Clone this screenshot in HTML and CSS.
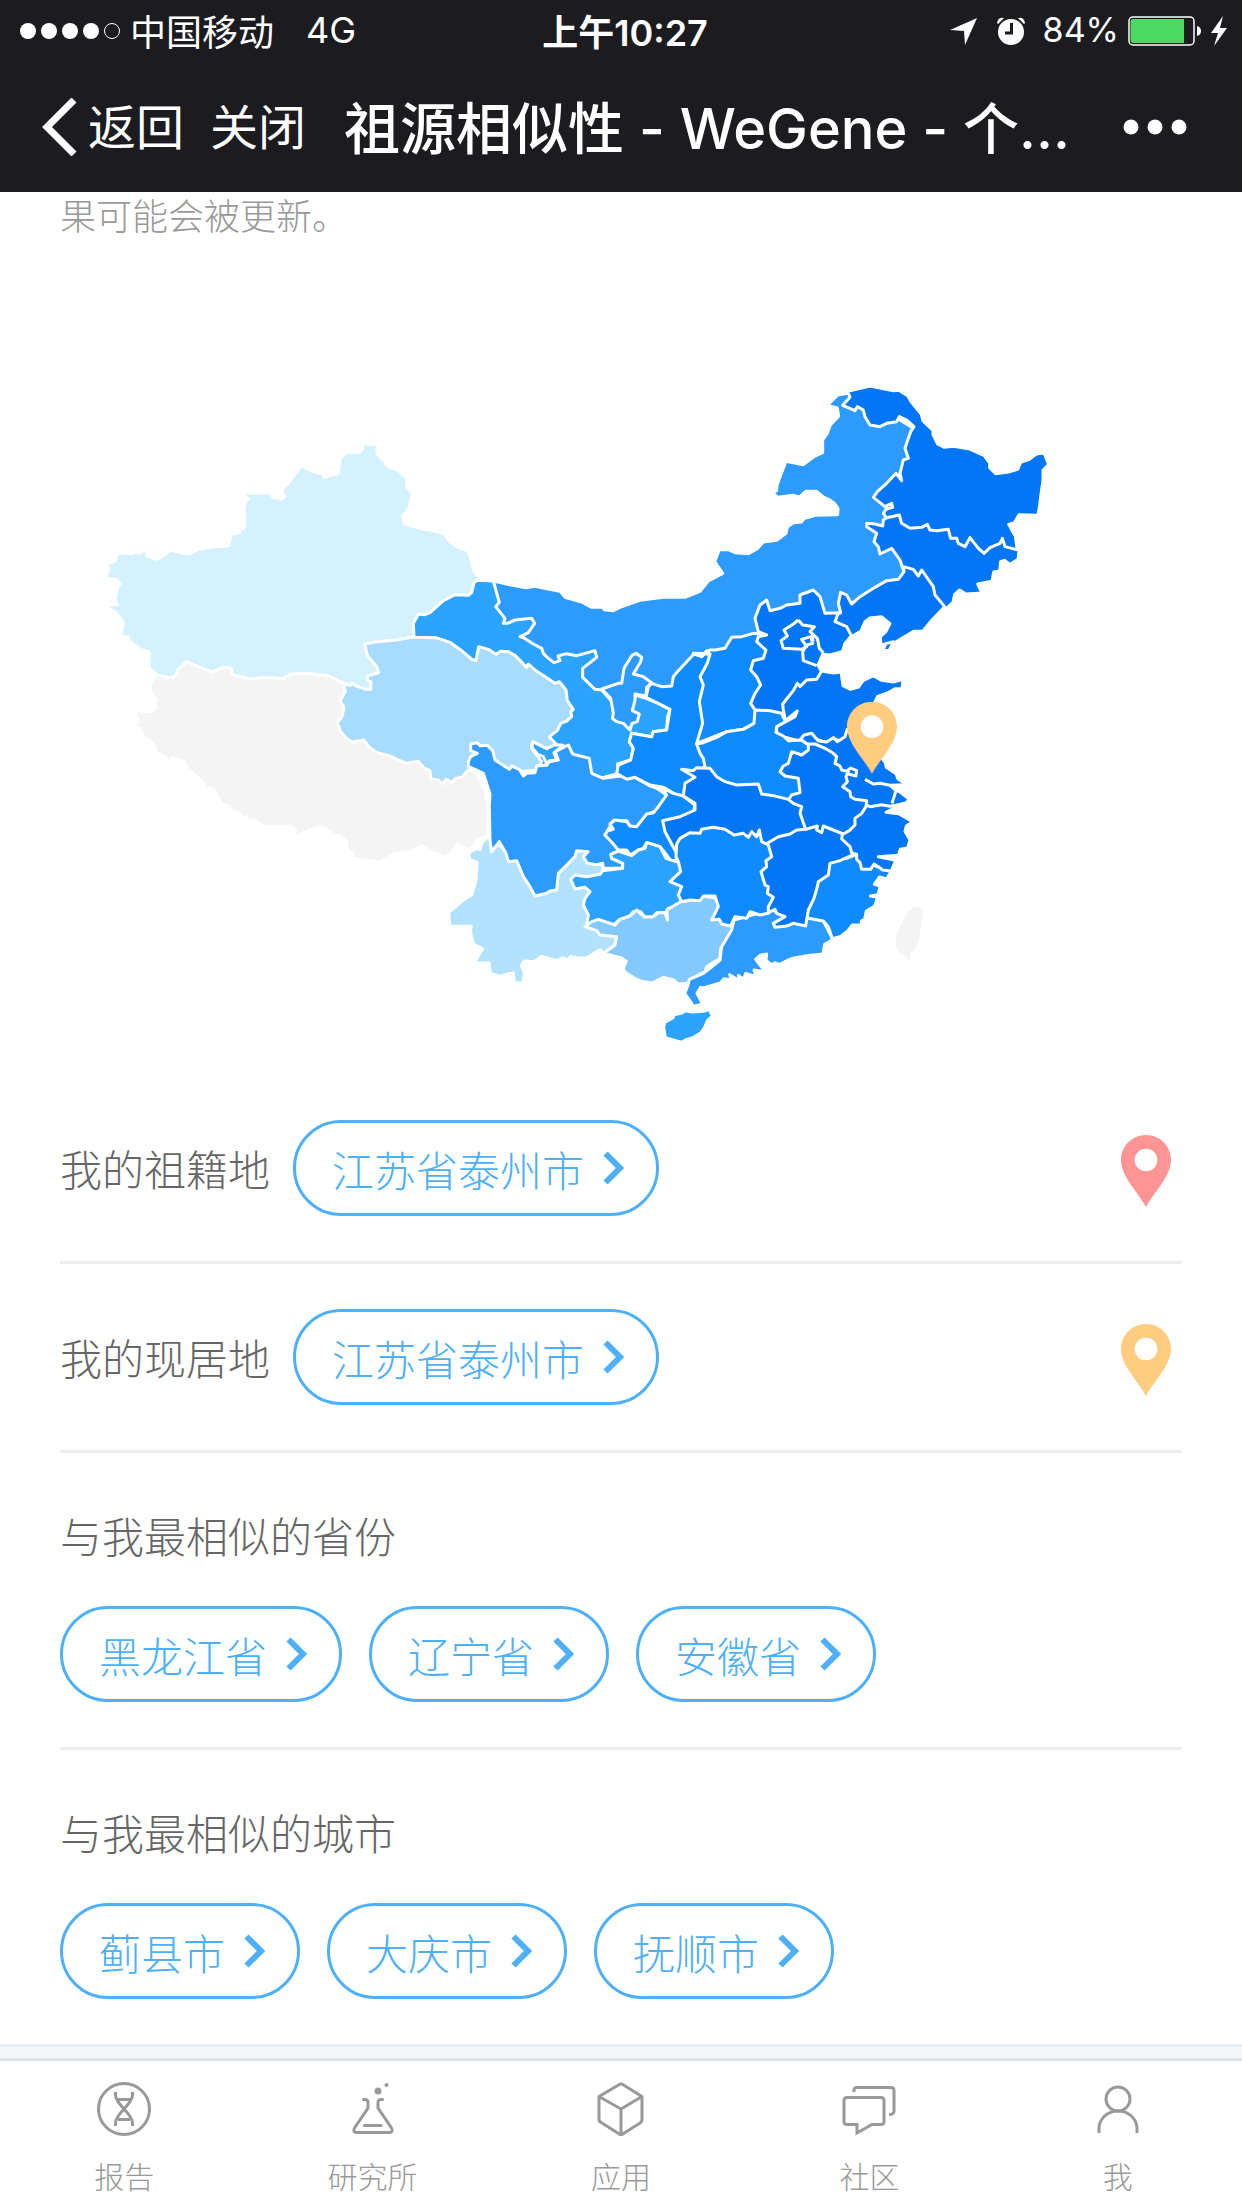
FILE: index.html
```html
<!DOCTYPE html>
<html lang="zh-CN">

<head>
    <meta charset="UTF-8">
    <meta name="viewport" content="width=device-width, initial-scale=1.0">
    <title>祖源相似性 - WeGene</title>
    <link rel="stylesheet" href="styles.css">
</head>

<body>
    <!-- 公用图标 -->
    <svg class="sprite" aria-hidden="true">
        <symbol id="pin" viewBox="0 0 150 216">
            <path d="M75 0C33 0 0 33 0 75C0 124 50 170 75 216C100 170 150 124 150 75C150 33 117 0 75 0Z" />
            <circle cx="75" cy="75" r="34" fill="#fff" />
        </symbol>
        <symbol id="arrow" viewBox="0 0 21 34">
            <path d="M2.500 2.500L17 17L2.500 31.500" fill="none" stroke="currentColor" stroke-width="6" />
        </symbol>
    </svg>

    <header class="header">
        <div class="status">
            <div class="status-left">
                <svg class="signal" viewBox="0 0 102 18">
                    <circle cx="9" cy="9" r="8" />
                    <circle cx="30" cy="9" r="8" />
                    <circle cx="51" cy="9" r="8" />
                    <circle cx="72" cy="9" r="8" />
                    <circle cx="93" cy="9" r="7.500" fill="none" stroke="#fff" />
                </svg>
                <span>中国移动</span>
                <span class="network">4G</span>
            </div>
            <div class="time">上午10:27</div>
            <div class="status-right">
                <svg class="location" viewBox="0 0 27 27"><path d="M27 0L15 27L14 13L0 12Z" /></svg>
                <svg class="alarm" viewBox="0 0 28 28">
                    <circle cx="14" cy="15" r="13" />
                    <path d="M0 6Q1 0 7 1L1 7ZM28 6Q27 0 21 1L27 7Z" />
                    <path d="M14.500 6V16H8" fill="none" stroke="#1b1b20" stroke-width="3" />
                </svg>
                <span class="percent">84%</span>
                <svg class="battery" viewBox="0 0 74 30">
                    <rect x="1" y="1" width="65" height="28" rx="4" fill="none" stroke="#fff" stroke-width="1.500" />
                    <path d="M5 3H56V27H5Q2.500 27 2.500 24V6Q2.500 3 5 3Z" fill="#4cd964" />
                    <path d="M69 10Q73 11 73 15Q73 19 69 20Z" />
                </svg>
                <svg class="bolt" viewBox="0 0 16 30"><path d="M12 0L0 17H7L3 30L16 12H9Z" /></svg>
            </div>
        </div>
        <div class="navbar">
            <button class="back" type="button">
                <svg viewBox="0 0 36 58"><path d="M32 2L5 29L32 56" fill="none" stroke="#fff" stroke-width="7" /></svg>
                <span>返回</span>
            </button>
            <button class="close" type="button">关闭</button>
            <h1>祖源相似性 - WeGene - 个…</h1>
            <button class="more" type="button" aria-label="更多">
                <svg viewBox="0 0 64 16">
                    <circle cx="8" cy="8" r="7.500" />
                    <circle cx="32" cy="8" r="7.500" />
                    <circle cx="56" cy="8" r="7.500" />
                </svg>
            </button>
        </div>
    </header>

    <main class="content">
        <p class="tip">果可能会被更新。</p>

        <!-- 地图：后画的省份盖住先画的，省界只描一次 -->
        <svg class="map" viewBox="0 0 3366 2115" role="img" aria-label="祖源相似性地图">
            <!-- 内蒙古 -->
            <path class="c4" d="M1300 633L1350 644L1398 653L1425 649L1460 656L1500 664L1517 683L1565 696L1595 712L1630 712L1632 719L1660 722L1680 712L1740 691L1810 682L1875 682L1920 664L1945 633L1988 610L1980 598L1964 575L1978 539L2005 539L2025 548L2065 551L2092 536L2110 516L2150 511L2178 490L2182 471L2200 458L2225 456L2232 446L2265 436L2333 434L2334 415L2322 399L2308 389L2290 381L2270 364L2237 364L2218 381L2200 376L2153 382L2138 368L2150 362L2151 345L2178 274L2230 284L2265 258L2288 248L2288 210L2302 190L2311 165L2336 139L2332 114L2302 106L2333 75L2365 69L2440 100L2600 200L2560 330L2500 400L2500 480L2540 600L2500 680L2390 730L2330 740L2250 740L2130 780L2040 830L1950 880L1860 960L1780 990L1700 1040L1600 980L1500 900L1350 800L1280 700Z" />

            <!-- 西藏 -->
            <g transform="translate(90 150)">
                <path class="c0" d="M200 766L182 790L180 815L199 838L194 850L196 863L186 874L155 876L142 856L138 885L146 905L132 920L152 927L162 953L177 959L194 977L196 993L228 1014L232 1030L247 1014L283 1024L287 1041L317 1067L337 1085L348 1104L370 1106L378 1117L380 1132L400 1154L420 1160L414 1171L443 1177L459 1195L469 1190L476 1204L490 1198L526 1221L606 1221L616 1231L606 1262L632 1241L680 1222L704 1224L734 1246L751 1247L770 1264L766 1280L788 1300L784 1317L830 1321L869 1327L911 1302L950 1296L998 1278L1029 1298L1067 1311L1086 1295L1104 1272L1140 1292L1165 1258L1192 1250L1196 1170L1185 1110L1160 1060L1130 1040L1080 1060L760 900L800 760L600 740L300 700Z" />
            </g>

            <g transform="translate(1020 510)">
                <!-- 云南 -->
                <path class="c1" d="M206 938L228 926L240 928L245 908L265 890L400 1000L500 900L600 940L610 990L680 1060L600 1160L650 1190L645 1215L613 1241L600 1229L560 1254L530 1254L512 1249L500 1262L490 1254L470 1262L425 1249L400 1266L374 1262L364 1276L374 1300L368 1329L343 1329L340 1299L322 1302L300 1309L271 1300L267 1269L224 1268L239 1240L248 1227L221 1212L214 1190L211 1170L214 1159L149 1159L146 1118L188 1082L216 1063L228 1020L231 967L209 958Z" />
                <!-- 甘肃 -->
                <path class="c3" d="M232 121L280 123L298 187L287 200L315 235L310 250L322 250L345 240L395 235L404 250L385 278L360 290L372 294L400 312L425 325L430 340L445 355L462 368L480 362L474 348L500 341L530 347L585 332L590 352L548 385L548 412L585 448L605 450L650 500L705 465L738 475L775 490L810 508L803 530L800 570L775 573L760 575L755 590L695 580L688 605L700 625L692 660L652 672L655 700L600 715L500 690L400 700L380 600L300 400L150 350L40 310L30 240L130 150L215 130Z" />
                <!-- 青海 -->
                <path class="c2" d="M-168 438L-164 455L-180 482L-168 502L-174 530L-188 548L-178 575L-163 593L-144 606L-108 600L-94 620L-68 638L-30 648L-5 660L20 670L55 664L72 684L90 692L92 716L115 720L128 732L138 718L158 728L165 716L185 712L205 690L300 700L412 690L425 665L395 625L398 605L440 626L468 612L448 590L472 572L482 550L500 543L515 530L512 515L520 508L502 482L498 450L478 425L465 430L432 408L405 390L385 372L380 382L345 346L325 335L302 334L288 343L265 328L236 320L228 362L214 357L185 332L152 308L108 293L40 292L-10 290L-120 300L-120 380Z" />
                <!-- 四川 -->
                <path class="c4" d="M205 680L205 665L212 650L232 640L212 632L212 612L232 608L240 617L262 616L278 632L285 660L328 688L335 678L358 688L370 708L380 700L405 698L410 678L440 676L448 665L475 660L466 635L505 615L518 642L568 655L575 700L610 715L660 708L705 712L745 735L770 745L800 765L775 810L740 825L710 862L690 858L680 842L640 842L615 885L690 945L640 940L635 955L668 970L668 985L610 985L608 970L590 974L562 970L550 950L564 935L530 932L525 950L505 970L475 1000L470 1050L450 1053L440 1060L405 1068L390 1040L370 1010L350 962L325 965L318 940L298 905L275 935L270 900L268 800L270 762L250 700L225 688Z" />
                <!-- 甘肃南端 -->
                <path class="c3" d="M398 605L440 626L466 614L490 616L462 638L470 660L448 662L440 672L430 650L412 642L396 622Z" />
                <!-- 宁夏 -->
                <path class="c4" d="M605 447L655 430L665 430L672 385L695 347L708 340L725 352L722 365L700 402L730 410L755 428L740 442L738 468L705 462L705 480L697 512L718 522L712 545L696 550L690 570L670 550L650 545L637 535L640 520L632 475Z" />
                <!-- 陕西 -->
                <path class="c5" d="M738 472L745 440L755 430L785 440L815 438L820 410L828 400L860 365L882 342L905 350L920 332L945 340L1000 400L1000 600L940 680L965 720L852 768L830 765L790 742L750 735L705 712L680 718L650 700L655 675L692 660L700 625L688 605L695 580L755 590L760 575L800 570L810 508L775 490Z" />
                <!-- 重庆 -->
                <path class="c5" d="M800 765L785 742L820 760L850 768L885 795L880 818L860 825L900 900L833 960L812 962L800 945L780 920L740 908L730 925L715 930L690 945L680 930L655 930L638 910L615 885L622 873L640 868L630 852L645 840L680 845L690 858L710 860L740 822L760 818L775 800Z" />
                <!-- 贵州 -->
                <path class="c3" d="M608 992L668 985L668 970L635 955L632 943L655 933L695 947L715 930L735 925L740 908L780 920L798 955L828 965L835 960L900 1025L850 1085L830 1097L805 1105L800 1117L770 1118L760 1130L735 1132L722 1115L700 1115L690 1128L660 1138L640 1155L595 1140L560 1155L565 1125L550 1095L555 1075L570 1055L555 1042L525 1047L512 1018L525 1005L560 1010L600 1003Z" />
                <!-- 广西 -->
                <path class="c2b" d="M555 1160L575 1145L595 1138L645 1155L660 1138L690 1128L710 1110L735 1132L760 1130L775 1118L795 1118L803 1140L800 1110L842 1085L880 1080L900 1078L910 1068L950 1075L1000 1110L1010 1165L990 1195L978 1210L962 1225L960 1255L920 1280L915 1295L895 1305L872 1329L835 1332L819 1319L790 1312L755 1329L724 1324L703 1314L677 1298L669 1286L679 1264L664 1254L611 1240L645 1215L650 1190L600 1185L590 1172Z" />
            </g>

            <!-- 新疆 -->
            <g transform="translate(90 150)">
                <path class="c1b" d="M45 474L56 450L53 433L75 422L81 402L96 398L124 401L140 394L145 400L169 390L172 409L200 418L220 407L241 390L270 398L297 402L329 387L372 380L415 377L424 344L449 337L436 326L460 326L464 312L462 268L466 243L476 238L456 219L543 219L549 233L567 233L572 238L584 230L575 211L597 186L635 136L670 156L701 163L702 171L744 161L751 116L768 98L805 97L818 88L818 71L867 74L860 90L862 103L884 124L888 134L902 144L920 148L949 174L952 205L967 221L957 264L938 290L943 311L966 318L1001 328L1041 334L1065 344L1073 359L1102 381L1132 392L1142 411L1149 448L1168 476L1152 488L1145 518L1135 526L1095 524L1060 542L1020 578L1005 584L986 582L970 610L972 650L920 660L860 665L824 672L832 706L860 740L866 758L832 768L832 780L843 786L842 808L828 808L796 797L786 788L780 797L745 782L712 767L650 760L600 762L580 776L530 772L480 777L428 764L424 745L400 742L365 756L330 742L290 724L262 750L258 766L245 774L202 766L176 743L178 696L153 689L118 664L115 652L92 649L100 607L89 591L76 576L40 557L82 553L76 539L82 504L90 492L78 478Z" />
            </g>

            <g transform="translate(1680 0)">
                <!-- 黑龙江 -->
                <path class="c6" d="M683 64L750 48L820 62L836 61L863 77L874 96L904 133L909 153L939 181L939 194L953 222L973 232L1000 229L1046 236L1093 257L1109 279L1109 293L1127 311L1165 306L1193 298L1202 277L1228 268L1249 252L1272 249L1286 283L1269 301L1269 330L1262 380L1259 405L1254 436L1197 434L1183 458L1166 463L1186 499L1192 542L1100 580L850 520L790 430L798 418L818 412L815 400L795 410L760 382L772 365L800 340L828 310L845 332L840 310L850 270L865 265L855 235L865 205L872 185L882 170L860 150L838 140L830 155L800 160L780 170L750 165L735 140L730 120L712 110L705 122L668 106L690 82Z" />
                <!-- 吉林 -->
                <path class="c6" d="M740 460L765 462L788 468L790 450L800 443L838 435L845 460L870 475L905 472L922 463L930 480L950 482L985 478L992 505L1010 505L1015 520L1035 530L1050 503L1075 535L1092 550L1110 533L1140 520L1147 505L1155 530L1197 541L1194 568L1170 583L1154 571L1142 574L1139 603L1121 606L1116 634L1073 642L1086 669L1038 672L1019 660L1004 673L999 697L976 718L905 640L850 600L840 570L815 535L780 552L775 530L762 515L770 490L740 470Z" />
                <!-- 辽宁 -->
                <path class="c6" d="M662 667L680 675L695 702L720 680L765 652L800 632L835 628L852 605L850 590L880 598L895 618L905 600L940 650L945 675L974 710L938 748L908 784L881 784L822 819L783 824L781 801L798 784L810 761L784 740L750 744L735 755L723 783L691 802L676 775L645 755L650 735L662 728L655 700Z" />
                <path class="c6" d="M789 840L798 821L820 815L807 842Z" />
                <!-- 山西 -->
                <path class="c5" d="M220 850L245 858L270 840L285 840L315 835L335 802L365 800L400 790L440 795L480 850L480 1060L402 1060L370 1078L320 1085L230 1120L248 1060L238 995L250 945L240 920L262 880L270 852Z" />
                <!-- 河北、北京、天津 -->
                <path class="c6" d="M440 690L450 722L480 715L500 705L540 700L540 675L580 660L600 680L615 730L655 728L645 755L680 770L694 797L674 822L668 844L630 855L608 853L594 885L605 905L660 1000L490 1035L405 1020L392 1000L405 970L422 945L410 920L392 900L400 872L430 865L438 840L410 815L415 800L440 795L415 785L405 745L420 705Z" />
                <path class="line" d="M535 750L548 765L583 770L570 785L592 805L598 835L610 848M535 750L520 762L492 780L502 798L483 812L490 835L545 838L560 830L545 808L572 800L578 820L560 825L548 845L550 872L590 887M575 795L580 815" />
            </g>

            <g transform="translate(1800 810)">
                <!-- 广东 -->
                <path class="c4" d="M88 1018L130 1000L150 985L180 960L185 920L215 870L222 840L330 810L440 830L490 843L519 899L494 913L489 942L450 946L402 954L387 959L361 972L331 972L318 960L320 942L300 946L287 958L316 996L282 990L289 1010L257 1000L251 1018L235 1006L241 1024L209 1004L214 1020L192 1016L181 1029L130 1044L122 1042L111 1060L128 1092L100 1099L90 1082L74 1061L84 1035Z" />
                <!-- 福建 -->
                <path class="c5" d="M560 655L590 643L650 680L694 692L680 717L658 711L643 733L661 738L654 764L631 768L653 772L644 798L619 813L614 838L604 843L604 855L577 855L563 873L542 889L517 896L505 860L490 843L445 835L420 780L450 700L500 660Z" />
                <!-- 浙江 -->
                <path class="c6" d="M600 480L670 492L718 490L696 508L678 517L716 521L758 545L739 558L735 574L750 600L743 624L721 628L715 646L655 650L707 661L694 693L668 690L655 680L642 672L632 688L605 688L600 668L590 658L590 643L575 640L530 590L580 530Z" />
                <!-- 江西 -->
                <path class="c6" d="M305 612L355 580L437 555L500 550L548 578L545 597L570 620L577 645L540 662L510 670L505 705L475 725L472 740L462 775L445 810L437 858L400 850L380 858L345 862L340 850L375 830L350 820L345 808L325 818L300 770L280 690Z" />
                <!-- 山东 -->
                <path class="c6" d="M370 210L368 192L400 152L412 130L420 140L440 120L470 118L485 93L520 99L543 96L549 137L571 148L596 141L609 122L640 107L665 121L700 126L729 118L726 146L706 146L682 159L653 169L645 185L640 240L562 270L555 290L540 305L522 295L500 308L475 300L445 290L425 305L350 285L350 260L375 235Z" />
                <!-- 江苏、上海 -->
                <path class="c6" d="M420 300L432 285L455 280L475 303L500 306L520 293L532 305L555 290L562 268L600 290L655 340L676 368L679 382L708 401L714 417L742 435L700 440L748 478L737 489L715 494L690 499L665 494L630 500L540 460L500 350Z" />
                <path class="line" d="M738 434L690 436L660 430L640 432L615 418M690 436L708 452L742 462M708 452L696 490M565 402L588 408L590 392L572 384L562 392" />
                <!-- 安徽 -->
                <path class="c6" d="M440 312L465 312L495 325L520 340L530 350L525 370L540 378L545 390L565 395L558 410L562 425L548 440L570 455L572 470L585 478L620 482L618 500L605 520L585 535L585 555L568 572L550 582L520 570L490 558L485 578L470 570L472 558L437 568L380 480L355 395L400 335Z" />
                <!-- 河南 -->
                <path class="c5" d="M110 312L130 308L170 292L200 275L250 268L282 250L285 210L330 212L365 220L375 243L412 213L405 230L350 260L348 277L370 288L385 302L425 300L445 315L445 330L425 345L395 335L385 370L370 378L360 395L375 408L415 415L420 458L395 465L385 480L350 520L150 460L130 355L120 340Z" />
                <!-- 湖北 -->
                <path class="c6" d="M65 388L100 392L110 383L150 385L170 410L195 425L230 435L295 432L305 462L340 467L385 478L400 490L425 500L420 520L437 568L410 570L390 582L355 590L318 612L300 640L50 640L15 575L8 542L60 530L105 510L105 490L70 468L75 430L105 412Z" />
                <!-- 湖南 -->
                <path class="c5" d="M50 612L60 595L90 578L120 580L125 568L160 562L195 568L222 585L250 580L265 592L275 575L290 590L298 570L305 605L325 615L335 650L318 662L320 680L303 695L315 735L325 740L322 760L340 772L325 800L325 820L300 825L270 815L260 835L225 830L212 858L185 852L178 838L155 840L175 800L165 768L130 768L120 782L90 780L65 785L55 765L65 740L30 725L62 695L55 665L48 650Z" />
                <!-- 海南 -->
                <path class="c3" d="M11 1160L14 1147L38 1134L43 1124L68 1118L74 1112L95 1116L130 1114L147 1108L158 1128L143 1141L134 1162L123 1178L97 1194L76 1200L66 1207L16 1193Z" />
                <!-- 台湾、香港 -->
                <path class="c0" d="M768 795L795 802L790 841L782 901L769 932L754 943L754 980L735 953L712 937L702 916L706 878L732 827L747 804Z" />
                <path class="c0" d="M326 989L345 968L376 991Z" />
                <use class="pin-yellow" href="#pin" x="561" y="185" width="150" height="216" />
            </g>
        </svg>

        <section class="row">
            <span class="label">我的祖籍地</span>
            <a class="pill" href="#">江苏省泰州市<svg><use href="#arrow" /></svg></a>
            <svg class="marker pin-red"><use href="#pin" /></svg>
        </section>
        <section class="row">
            <span class="label">我的现居地</span>
            <a class="pill" href="#">江苏省泰州市<svg><use href="#arrow" /></svg></a>
            <svg class="marker pin-yellow"><use href="#pin" /></svg>
        </section>
        <section class="group">
            <h2>与我最相似的省份</h2>
            <div class="pills">
                <a class="pill" href="#">黑龙江省<svg><use href="#arrow" /></svg></a>
                <a class="pill" href="#">辽宁省<svg><use href="#arrow" /></svg></a>
                <a class="pill" href="#">安徽省<svg><use href="#arrow" /></svg></a>
            </div>
        </section>
        <section class="group">
            <h2>与我最相似的城市</h2>
            <div class="pills">
                <a class="pill" href="#">蓟县市<svg><use href="#arrow" /></svg></a>
                <a class="pill" href="#">大庆市<svg><use href="#arrow" /></svg></a>
                <a class="pill" href="#">抚顺市<svg><use href="#arrow" /></svg></a>
            </div>
        </section>
    </main>

    <nav class="tabs">
        <a href="#">
            <svg viewBox="0 0 54 54">
                <circle cx="27" cy="27" r="25.500" />
                <path d="M18.500 10V13C18.500 23 35.500 31 35.500 41V44M35.500 10V13C35.500 23 18.500 31 18.500 41V44M21 17.500H33M21 37.500H33" />
            </svg>
            报告
        </a>
        <a href="#">
            <svg viewBox="0 0 54 54">
                <path stroke-linecap="round" d="M17.500 17.500H19Q22 17.500 22 20.500V26L8.500 46Q6.500 50.500 10.500 50.500H43.500Q47.500 50.500 45.500 46L32 26V20.500Q32 17.500 35 17.500H36.500M18.500 43.500H35" />
                <circle class="dot" cx="32" cy="9" r="3.500" />
                <circle class="dot" cx="40.500" cy="3" r="2" />
            </svg>
            研究所
        </a>
        <a href="#">
            <svg viewBox="0 0 54 54">
                <path stroke-linejoin="round" d="M24.500 3Q27 1 29.500 3L48 14.500V37Q48 40 46 41L29.500 51.500Q27 53.500 24.500 51.500L8 41Q5 40 5 37V14.500ZM5 14.500L27 27L48 14.500M27 27V52" />
            </svg>
            应用
        </a>
        <a href="#">
            <svg viewBox="0 0 54 54">
                <path d="M12 10V8Q12 5.500 15 5.500H49Q52 5.500 52 8.500V29Q52 32.500 47 32.500M5 15.500H39Q42 15.500 42 18.500V39.500Q42 42.500 39 42.500H30L15 51V42.500H5Q2 42.500 2 39.500V18.500Q2 15.500 5 15.500Z" />
            </svg>
            社区
        </a>
        <a href="#">
            <svg viewBox="0 0 54 54">
                <circle cx="27" cy="17" r="12" />
                <path d="M8 51V47C8 37 16 29 27 29C38 29 46 37 46 47V51" />
            </svg>
            我
        </a>
    </nav>
</body>

</html>
```
FILE: styles.css
```css
* {
    padding: 0;
    margin: 0;
    box-sizing: border-box;
}

body {
    display: flex;
    flex-direction: column;
    min-height: 100vh;
    background: #f3f7fa;
    font-family: Inter, "Noto Sans CJK SC", sans-serif;
    font-weight: 300;
}

a {
    text-decoration: none;
}

button {
    border: 0;
    background: none;
    color: inherit;
    font: inherit;
    cursor: pointer;
}

.sprite {
    display: none;
}

/* 顶部 */
.header {
    background: #1b1b20;
    color: #fff;
    fill: #fff;
    font-weight: 400;
}

.status {
    display: grid;
    grid-template-columns: 1fr auto 1fr;
    align-items: center;
    height: 62px;
    padding: 0 15px 0 19px;
    font-size: 36px;
}

.status-left,
.status-right {
    display: flex;
    align-items: center;
}

.status-right {
    justify-content: flex-end;
}

.status span,
.time {
    padding-bottom: 3px;
}

.signal {
    width: 102px;
    height: 18px;
    margin-right: 9px;
}

.network {
    margin-left: 32px;
}

.time {
    padding-left: 4px;
    font-weight: 600;
}

.location {
    width: 27px;
    height: 27px;
    margin-right: 20px;
}

.alarm {
    width: 28px;
    height: 28px;
    margin-right: 18px;
}

.percent {
    font-size: 34px;
}

.battery {
    width: 74px;
    height: 30px;
    margin: 0 9px;
}

.bolt {
    width: 16px;
    height: 30px;
}

.navbar {
    display: flex;
    align-items: center;
    height: 130px;
    padding: 0 55px 0 42px;
    font-size: 48px;
}

.back {
    display: flex;
    align-items: center;
    gap: 10px;
}

.back svg {
    width: 36px;
    height: 58px;
}

.back span,
.close,
.navbar h1 {
    padding-bottom: 6px;
}

.close {
    margin-left: 26px;
}

.navbar h1 {
    flex: 1;
    margin-left: 38px;
    font-size: 56px;
    font-weight: 500;
    white-space: nowrap;
}

.more svg {
    display: block;
    width: 64px;
    height: 16px;
}

/* 内容 */
.content {
    padding: 0 60px;
    background: #fff;
    border-bottom: 3px solid #e9eef2;
}

.tip {
    color: #999;
    font-size: 36px;
    line-height: 50px;
}

.map {
    display: block;
    width: 100%;
    margin-top: 128px;
    stroke: #fff;
    stroke-width: 9px;
    stroke-linejoin: round;
}

.c0 {
    fill: #f4f4f4;
}

.c1 {
    fill: #b2e2ff;
}

.c1b {
    fill: #d3f1ff;
}

.c2 {
    fill: #a7dbff;
}

.c2b {
    fill: #84c9ff;
}

.c3 {
    fill: #2ca4ff;
}

.c4 {
    fill: #2c9aff;
}

.c5 {
    fill: #0f8bff;
}

.c6 {
    fill: #0276f5;
}

.line {
    fill: none;
}

.pin-yellow {
    fill: #ffcc80;
    stroke: none;
}

.pin-red {
    fill: #ff9494;
}

.row,
.group {
    border-bottom: 3px solid #ebedf0;
}

.row {
    display: flex;
    align-items: center;
    padding: 45px 11px 45px 0;
}

.group {
    padding: 55px 0 45px;
}

.group:last-child {
    border-bottom: 0;
}

.label,
.group h2 {
    color: #666;
    font-size: 42px;
    font-weight: 300;
    line-height: 60px;
}

.label {
    margin-right: 23px;
    padding-top: 6px;
}

.pills {
    display: flex;
    flex-wrap: wrap;
    gap: 27px;
    margin-top: 38px;
}

.pill {
    display: flex;
    align-items: center;
    height: 96px;
    padding: 0 32px 0 36px;
    border: 3px solid #4eb0fa;
    border-radius: 48px;
    color: #4eb0fa;
    font-size: 42px;
}

.pill svg {
    width: 21px;
    height: 34px;
    margin-left: 19px;
}

.marker {
    width: 50px;
    height: 72px;
    margin: 6px 0 0 auto;
}

/* 底部导航 */
.tabs {
    display: flex;
    margin-top: auto;
    padding: 21px 0 19px;
    border-top: 3px solid #e0e4e7;
    background: #fff;
}

.tabs a {
    flex: 1;
    display: flex;
    flex-direction: column;
    align-items: center;
    gap: 29px;
    color: #999;
    font-size: 30px;
    line-height: 24px;
}

.tabs svg {
    width: 54px;
    height: 54px;
    fill: none;
    stroke: #999;
    stroke-width: 3px;
}

.tabs .dot {
    fill: #999;
    stroke: none;
}
```
